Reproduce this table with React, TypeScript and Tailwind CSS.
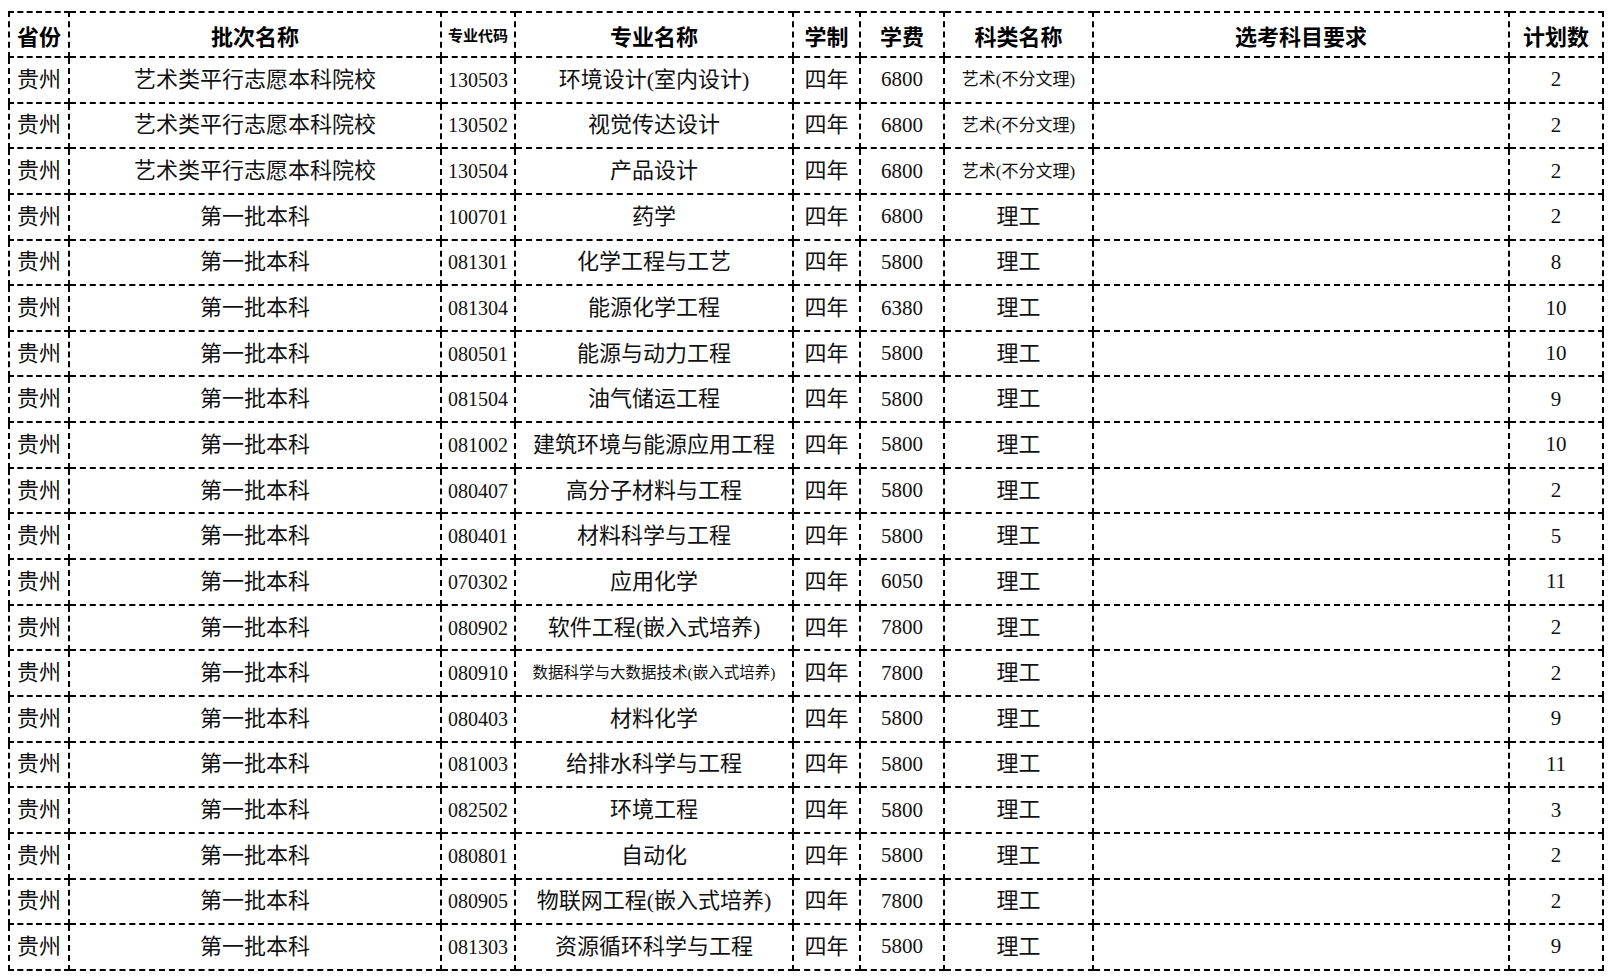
import React from 'react';

type Row = {
  code: string;
  name: string;
  fee: string;
  kind: string;
  plan: string;
  batch: string;
  small?: boolean;
};

const ART = '艺术类平行志愿本科院校';
const FIRST = '第一批本科';

const rows: Row[] = [
  { batch: ART, code: '130503', name: '环境设计(室内设计)', fee: '6800', kind: '艺术(不分文理)', plan: '2' },
  { batch: ART, code: '130502', name: '视觉传达设计', fee: '6800', kind: '艺术(不分文理)', plan: '2' },
  { batch: ART, code: '130504', name: '产品设计', fee: '6800', kind: '艺术(不分文理)', plan: '2' },
  { batch: FIRST, code: '100701', name: '药学', fee: '6800', kind: '理工', plan: '2' },
  { batch: FIRST, code: '081301', name: '化学工程与工艺', fee: '5800', kind: '理工', plan: '8' },
  { batch: FIRST, code: '081304', name: '能源化学工程', fee: '6380', kind: '理工', plan: '10' },
  { batch: FIRST, code: '080501', name: '能源与动力工程', fee: '5800', kind: '理工', plan: '10' },
  { batch: FIRST, code: '081504', name: '油气储运工程', fee: '5800', kind: '理工', plan: '9' },
  { batch: FIRST, code: '081002', name: '建筑环境与能源应用工程', fee: '5800', kind: '理工', plan: '10' },
  { batch: FIRST, code: '080407', name: '高分子材料与工程', fee: '5800', kind: '理工', plan: '2' },
  { batch: FIRST, code: '080401', name: '材料科学与工程', fee: '5800', kind: '理工', plan: '5' },
  { batch: FIRST, code: '070302', name: '应用化学', fee: '6050', kind: '理工', plan: '11' },
  { batch: FIRST, code: '080902', name: '软件工程(嵌入式培养)', fee: '7800', kind: '理工', plan: '2' },
  { batch: FIRST, code: '080910', name: '数据科学与大数据技术(嵌入式培养)', fee: '7800', kind: '理工', plan: '2', small: true },
  { batch: FIRST, code: '080403', name: '材料化学', fee: '5800', kind: '理工', plan: '9' },
  { batch: FIRST, code: '081003', name: '给排水科学与工程', fee: '5800', kind: '理工', plan: '11' },
  { batch: FIRST, code: '082502', name: '环境工程', fee: '5800', kind: '理工', plan: '3' },
  { batch: FIRST, code: '080801', name: '自动化', fee: '5800', kind: '理工', plan: '2' },
  { batch: FIRST, code: '080905', name: '物联网工程(嵌入式培养)', fee: '7800', kind: '理工', plan: '2' },
  { batch: FIRST, code: '081303', name: '资源循环科学与工程', fee: '5800', kind: '理工', plan: '9' },
];

const widths = [60, 372, 74, 278, 67, 84, 149, 416, 94];

const cell = 'border-2 border-dashed border-black text-center p-0 whitespace-nowrap overflow-hidden';

export default function App() {
  return (
    <div className="bg-white min-h-screen w-full pt-[11px] pl-[8px] text-black">
      <table className="table-fixed border-collapse w-[1594px] font-['Liberation_Serif','Noto_Sans_CJK_SC',serif]">
        <colgroup>
          {widths.map((w, i) => (
            <col key={i} style={{ width: w }} />
          ))}
        </colgroup>
        <thead>
          <tr className="h-[45px] font-['Noto_Sans_CJK_SC',sans-serif] font-bold text-[22px] leading-none">
            <th className={cell}>省份</th>
            <th className={cell}>批次名称</th>
            <th className={`${cell} text-[15px]`}>专业代码</th>
            <th className={cell}>专业名称</th>
            <th className={cell}>学制</th>
            <th className={cell}>学费</th>
            <th className={cell}>科类名称</th>
            <th className={cell}>选考科目要求</th>
            <th className={cell}>计划数</th>
          </tr>
        </thead>
        <tbody className="text-[22px] leading-none text-[#111]">
          {rows.map((r, i) => (
            <tr key={i} className="h-[45.65px]">
              <td className={cell}>贵州</td>
              <td className={cell}>{r.batch}</td>
              <td className={`${cell} text-[20px]`}>{r.code}</td>
              <td className={`${cell} ${r.small ? 'text-[15.5px]' : ''}`}>{r.name}</td>
              <td className={cell}>四年</td>
              <td className={`${cell} text-[21px]`}>{r.fee}</td>
              <td className={`${cell} ${r.kind.length > 2 ? 'text-[17px]' : ''}`}>{r.kind}</td>
              <td className={cell}></td>
              <td className={`${cell} text-[21px]`}>{r.plan}</td>
            </tr>
          ))}
        </tbody>
      </table>
    </div>
  );
}
